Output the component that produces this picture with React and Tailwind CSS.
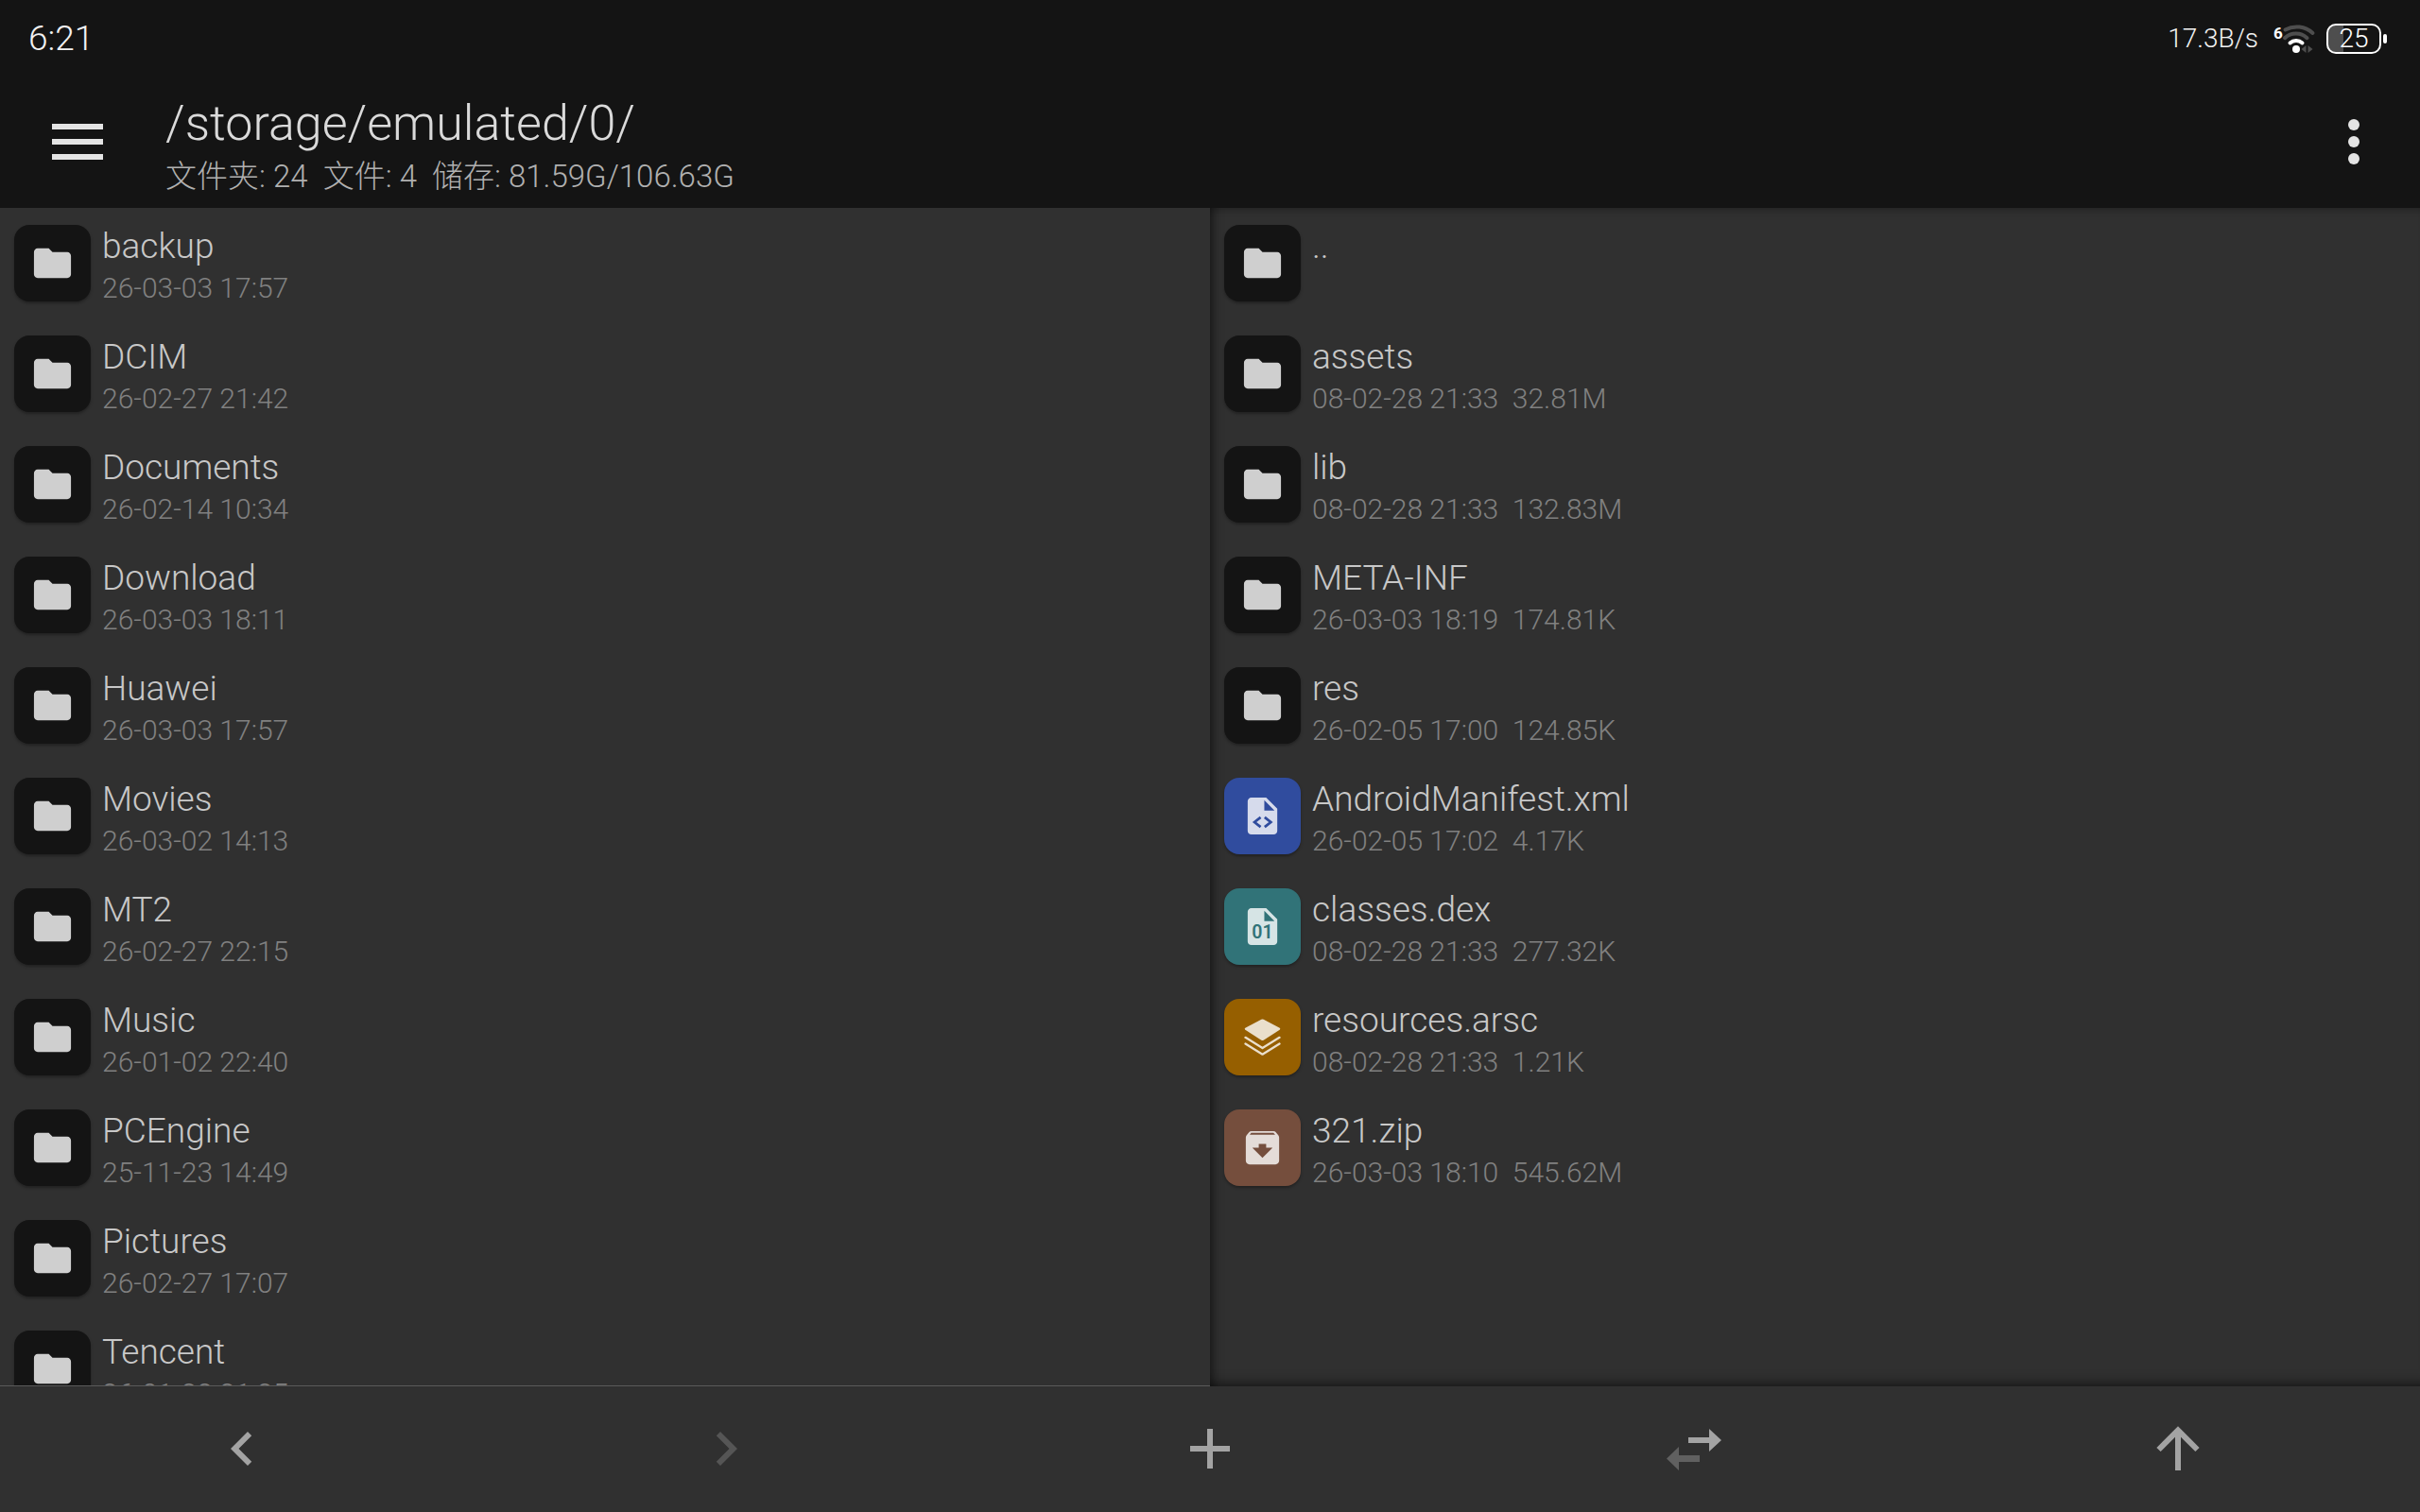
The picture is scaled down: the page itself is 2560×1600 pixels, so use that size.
import React from "react";

const LEFT = [
  ["backup", "26-03-03 17:57"],
  ["DCIM", "26-02-27 21:42"],
  ["Documents", "26-02-14 10:34"],
  ["Download", "26-03-03 18:11"],
  ["Huawei", "26-03-03 17:57"],
  ["Movies", "26-03-02 14:13"],
  ["MT2", "26-02-27 22:15"],
  ["Music", "26-01-02 22:40"],
  ["PCEngine", "25-11-23 14:49"],
  ["Pictures", "26-02-27 17:07"],
  ["Tencent", "26-01-22 21:25"],
].map(([name, date]) => ({ name, date, kind: "folder" }));

const RIGHT = [
  { name: "..", kind: "folder" },
  { name: "assets", date: "08-02-28 21:33", size: "32.81M", kind: "folder" },
  { name: "lib", date: "08-02-28 21:33", size: "132.83M", kind: "folder" },
  { name: "META-INF", date: "26-03-03 18:19", size: "174.81K", kind: "folder" },
  { name: "res", date: "26-02-05 17:00", size: "124.85K", kind: "folder" },
  { name: "AndroidManifest.xml", date: "26-02-05 17:02", size: "4.17K", kind: "xml" },
  { name: "classes.dex", date: "08-02-28 21:33", size: "277.32K", kind: "dex" },
  { name: "resources.arsc", date: "08-02-28 21:33", size: "1.21K", kind: "arsc" },
  { name: "321.zip", date: "26-03-03 18:10", size: "545.62M", kind: "zip" },
];

const TILE = {
  folder: "bg-[#141414] text-[#cfcfcf]",
  xml: "bg-[#304c9e] text-[#d6dbec]",
  dex: "bg-[#317378] text-[#d6e4e5]",
  arsc: "bg-[#965f00] text-[#eadfcc]",
  zip: "bg-[#754e3d] text-[#e4dcd8]",
};

const FILE_PATH =
  "M6 2c-1.1 0-1.99.9-1.99 2L4 20c0 1.1.89 2 1.99 2H18c1.1 0 2-.9 2-2V8l-6-6H6zm7 7V3.5L18.5 9H13z";

function Glyph({ kind }) {
  return (
    <svg
      viewBox="0 0 24 24"
      className={kind === "arsc" ? "size-[39px]" : "size-[47px]"}
      fill="currentColor"
      aria-hidden="true"
    >
      {kind === "folder" && (
        <path d="M10 4H4c-1.1 0-1.99.9-1.99 2L2 18c0 1.1.9 2 2 2h16c1.1 0 2-.9 2-2V8c0-1.1-.9-2-2-2h-8l-2-2z" />
      )}
      {kind === "xml" && (
        <>
          <path d={FILE_PATH} />
          <path d="M11 12.700 7.700 15.300l3.300 2.600M13.200 12.700l3.300 2.600-3.300 2.600" fill="none" stroke="#304c9e" strokeWidth="1.4" />
        </>
      )}
      {kind === "dex" && (
        <>
          <path d={FILE_PATH} />
          <text x="12" y="18.500" textAnchor="middle" fontSize="10" fontWeight="600" fill="#317378">01</text>
        </>
      )}
      {kind === "arsc" && (
        <>
          <path d="M11.3 0.500Q12 0.200 12.7 0.500L23.200 6Q24 6.500 23.200 7.200L12.700 14Q12 14.400 11.300 14L0.800 7.200Q0 6.500 0.800 6Z" />
          <path
            d="M0.900 12.200 12 19.100 23.100 12.200M0.900 16.300 12 23.200 23.100 16.300"
            fill="none"
            stroke="currentColor"
            strokeWidth="1.4"
            strokeLinecap="round"
            strokeLinejoin="round"
          />
        </>
      )}
      {kind === "zip" && (
        <path d="M20.54 5.23l-1.39-1.68C18.88 3.21 18.47 3 18 3H6c-.47 0-.88.21-1.16.55L3.46 5.23C3.17 5.57 3 6.02 3 6.5V19c0 1.1.9 2 2 2h14c1.1 0 2-.9 2-2V6.5c0-.48-.17-.93-.46-1.27zM12 17.5L6.5 12H10v-2h4v2h3.5L12 17.5zM5.12 5l.81-1h12l.94 1H5.12z" />
      )}
    </svg>
  );
}

function Row({ item }) {
  return (
    <li>
      <button type="button" className="flex w-full items-start gap-3 pt-[18px] pr-4 pb-[9px] pl-[15px] text-left">
        <span
          className={`flex size-[81px] shrink-0 items-center justify-center rounded-2xl shadow-[0_2px_3px_rgba(0,0,0,0.3)] ${TILE[item.kind]}`}
        >
          <Glyph kind={item.kind} />
        </span>
        <span className="flex min-h-[90px] min-w-0 flex-col whitespace-pre">
          <span className="text-[37px] leading-[46px] text-[#c8c8c8]">{item.name}</span>
          {item.date && (
            <span className="text-[30px] leading-[42px] text-[#808080]">
              {item.size ? `${item.date}  ${item.size}` : item.date}
            </span>
          )}
        </span>
      </button>
    </li>
  );
}

function StatusBar() {
  return (
    <div className="flex h-[82px] items-center justify-between pr-[35px] pl-[30px] text-[#f2f2f2]">
      <span className="text-[37px] leading-[44px]">6:21</span>
      <div className="flex items-center">
        <span className="text-[28px] leading-9">17.3B/s</span>
        <svg viewBox="0 0 48 34" className="ml-[14px] h-[34px] w-12" aria-label="Wi-Fi 6">
          <text x="2" y="17" fontSize="17" fontWeight="700" fill="#fff">6</text>
          <g fill="none" strokeWidth="4" strokeLinecap="round">
            <path d="M14.500 7.500A25 25 0 0 1 43.500 11" stroke="#4e4e4e" />
            <path d="M14 16.200A17 17 0 0 1 37.500 16.200" stroke="#4e4e4e" />
            <path d="M19.500 21.400A10 10 0 0 1 32.500 21.400" stroke="#fff" />
          </g>
          <circle cx="26" cy="28" r="4" fill="#fff" />
          <path d="M36.500 24v8L31.500 28ZM38.500 24v8L43.500 28Z" fill="#4e4e4e" />
        </svg>
        <div className="ml-[10px] flex items-center gap-[2px]">
          <div className="flex h-8 w-[58px] items-center justify-center overflow-hidden rounded-[10px] border-2 border-white bg-linear-to-r from-[#4e4e4e] from-30% to-transparent to-30% text-[28px] leading-8 text-white">
            25
          </div>
          <div className="h-[10px] w-1 rounded-sm bg-white" />
        </div>
      </div>
    </div>
  );
}

function NavButton({ label, dim, children }) {
  return (
    <button
      type="button"
      aria-label={label}
      className={`flex flex-1 items-center justify-center ${dim ? "text-[#555555]" : "text-[#a3a3a3]"}`}
    >
      <svg viewBox="0 0 72 72" className="size-[72px]" fill="currentColor" aria-hidden="true">
        {children}
      </svg>
    </button>
  );
}

export default function App() {
  return (
    <div className="flex h-screen flex-col overflow-hidden bg-[#303030] font-['Roboto','Noto_Sans_CJK_SC',sans-serif] font-light">
      <header className="bg-[#141414]">
        <StatusBar />
        <div className="flex h-[138px] items-start justify-between">
          <div className="flex items-start">
            <button type="button" aria-label="Menu" className="mt-[49px] ml-[55px] flex w-[54px] flex-col gap-[10px]">
              <span className="h-[6px] w-full bg-[#e4e4e4]" />
              <span className="h-[6px] w-full bg-[#e4e4e4]" />
              <span className="h-[6px] w-full bg-[#e4e4e4]" />
            </button>
            <div className="mt-[19px] ml-[66px] whitespace-pre">
              <h1 className="text-[52px] leading-[60px] font-light text-[#dadada]">/storage/emulated/0/</h1>
              <p className="text-[33px] leading-[52px] text-[#b0b0b0]">
                {"文件夹: 24  文件: 4  储存: 81.59G/106.63G"}
              </p>
            </div>
          </div>
          <button type="button" aria-label="More options" className="mt-[44px] mr-16 flex flex-col gap-[6px]">
            <span className="size-3 rounded-full bg-[#e4e4e4]" />
            <span className="size-3 rounded-full bg-[#e4e4e4]" />
            <span className="size-3 rounded-full bg-[#e4e4e4]" />
          </button>
        </div>
      </header>

      <main className="flex min-h-0 flex-1">
        <ul className="min-w-0 flex-1 overflow-hidden border-b border-[#5a5a5a]">
          {LEFT.map((item) => (
            <Row key={item.name} item={item} />
          ))}
        </ul>
        <ul className="min-w-0 flex-1 overflow-hidden shadow-[inset_14px_0_12px_-12px_rgba(0,0,0,0.6),inset_0_-16px_14px_-14px_rgba(0,0,0,0.6),inset_0_12px_10px_-12px_rgba(0,0,0,0.4)]">
          {RIGHT.map((item) => (
            <Row key={item.name} item={item} />
          ))}
        </ul>
      </main>

      <footer className="flex h-[133px] shrink-0 pb-[2px]">
        <NavButton label="Back">
          <path d="M46.230 22.230 42 18 24 36l18 18 4.230-4.230L32.490 36z" />
        </NavButton>
        <NavButton label="Forward" dim>
          <path d="M30 18 25.770 22.230 39.510 36 25.770 49.770 30 54l18-18z" />
        </NavButton>
        <NavButton label="Add">
          <path d="M57 39H39v18h-6V39H15v-6h18V15h6v18h18z" />
        </NavButton>
        <NavButton label="Switch panes">
          <path d="M30 24h22v-9l13 12-13 12v-9H30z" />
          <path d="M42 43H20v-9L7 46.500 20 59v-9h22z" className="text-[#606060]" fill="currentColor" />
        </NavButton>
        <NavButton label="Up">
          <path d="M15.500 37 36 16.500 56.500 37M36 18v41" fill="none" stroke="currentColor" strokeWidth="6" />
        </NavButton>
      </footer>
    </div>
  );
}
